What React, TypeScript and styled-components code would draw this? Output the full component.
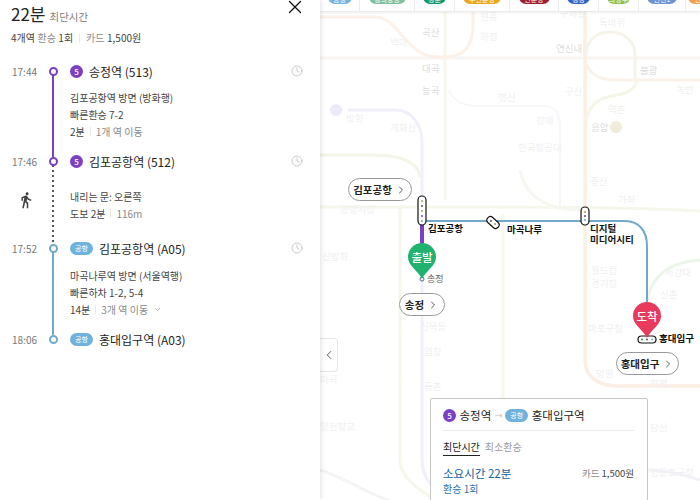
import { ChevronDown, ChevronLeft, ChevronRight, Clock, X } from 'lucide-react'
import { FC, ReactNode } from 'react'
import { MdDirectionsWalk } from 'react-icons/md'
import styled, { createGlobalStyle } from 'styled-components'

const PURPLE = '#7b3fc4'
const BLUE = '#70a9c9'
const AIRPORT = '#6fb2dd'

const GlobalStyle = createGlobalStyle`
  html, body {
    margin: 0;
    padding: 0;
    background: #fff;
  }
  body {
    font-family: "Noto Sans CJK KR", "Noto Sans", sans-serif;
    color: #222;
  }
`

const TOP_LINES = [
  { name: '공항', cell: 40, chip: 24, color: '#73b4e2' },
  { name: '경의중앙', cell: 55, chip: 37, color: '#7fbf9f' },
  { name: '경춘', cell: 40, chip: 23, color: '#0f9a6c' },
  { name: '수인분당', cell: 55, chip: 38, color: '#eba71c' },
  { name: '신분당', cell: 49, chip: 31, color: '#a01c33' },
  { name: '경강', cell: 40, chip: 23, color: '#2f62c4' },
  { name: '의정부', cell: 40, chip: 23, color: '#8cc04a' },
  { name: '인천1', cell: 47, chip: 30, color: '#6f93d2' },
  { name: '인천2', cell: 34, chip: 30, color: '#f0a04e' }
]

const FAINT_LABELS = [
  { text: '곡산', x: 102, y: 26, strong: true },
  { text: '백마', x: 70, y: 36 },
  { text: '화정', x: 160, y: 30 },
  { text: '원흥', x: 160, y: 10 },
  { text: '대곡', x: 102, y: 62, strong: true },
  { text: '능곡', x: 102, y: 84, strong: true },
  { text: '행신', x: 178, y: 91 },
  { text: '강매', x: 216, y: 114 },
  { text: '연신내', x: 236, y: 42, strong: true },
  { text: '구파발', x: 240, y: 7 },
  { text: '독바위', x: 279, y: 16 },
  { text: '불광', x: 320, y: 64, strong: true },
  { text: '구산', x: 245, y: 85 },
  { text: '녹번', x: 356, y: 83 },
  { text: '역촌', x: 288, y: 103 },
  { text: '응암', x: 271, y: 121, strong: true },
  { text: '방화', x: 26, y: 112 },
  { text: '개화산', x: 70, y: 121 },
  { text: '한국항공대', x: 198, y: 141 },
  { text: '증산', x: 270, y: 175 },
  { text: '가좌', x: 298, y: 193 },
  { text: '월드컵', x: 271, y: 264 },
  { text: '경기장', x: 271, y: 277 },
  { text: '신촌', x: 340, y: 288 },
  { text: '서강대', x: 345, y: 266 },
  { text: '마포구청', x: 268, y: 322 },
  { text: '망원', x: 276, y: 367 },
  { text: '합정', x: 330, y: 377 },
  { text: '당산', x: 330, y: 421 },
  { text: '영등포구청', x: 330, y: 466 },
  { text: '마곡', x: 0, y: 373 },
  { text: '양천향교', x: 0, y: 420 },
  { text: '신목동', x: 100, y: 320 },
  { text: '공항시장', x: 20, y: 203 },
  { text: '신방화', x: 2, y: 250 },
  { text: '염창', x: 104, y: 345 },
  { text: '등촌', x: 104, y: 380 }
]

const Stop: FC<{ time: string; badge: ReactNode; name: string; color: string; clock?: boolean }> = ({
  time,
  badge,
  name,
  color,
  clock
}) => (
  <StopRow>
    <Time>{time}</Time>
    <RailCell>
      <Dot $color={color} />
    </RailCell>
    <StopName>
      {badge}
      {name}
    </StopName>
    {clock && <Clock size={12} color="#b4b4b4" strokeWidth={1.4} />}
  </StopRow>
)

const Pin: FC<{ color: string; label: string; x: number; y: number }> = ({ color, label, x, y }) => (
  <PinWrap $x={x} $y={y}>
    <svg width="28" height="36" viewBox="0 0 28 36">
      <path d="M14 0a14 14 0 0 1 14 14c0 9-9.500 13-14 22C9.500 27 0 23 0 14A14 14 0 0 1 14 0z" fill={color} />
    </svg>
    <PinLabel>{label}</PinLabel>
  </PinWrap>
)

const App: FC = () => {
  return (
    <Page>
      <GlobalStyle />
      <Sidebar>
        <CloseButton>
          <X size={22} strokeWidth={1.4} color="#111" />
        </CloseButton>
        <Title>
          <Minutes>22분</Minutes>
          <TitleNote>최단시간</TitleNote>
        </Title>
        <Summary>
          <span>4개역</span>
          <Muted>환승</Muted>
          <span>1회</span>
          <SummarySep />
          <Muted>카드</Muted>
          <span>1,500원</span>
        </Summary>

        <Timeline>
          <Stop time="17:44" badge={<LineBadge>5</LineBadge>} name="송정역 (513)" color={PURPLE} clock />
          <Segment>
            <SideCell />
            <RailCell>
              <RailLine $color={PURPLE} />
            </RailCell>
            <Details $top={8} $bottom={11}>
              <div>김포공항역 방면 (방화행)</div>
              <div>빠른환승 7-2</div>
              <div>
                2분
                <Sep />
                <Muted>1개 역 이동</Muted>
              </div>
            </Details>
          </Segment>

          <Stop time="17:46" badge={<LineBadge>5</LineBadge>} name="김포공항역 (512)" color={PURPLE} clock />
          <Segment>
            <SideCell>
              <MdDirectionsWalk size={18} color="#444" />
            </SideCell>
            <RailCell>
              <RailLine $dotted $color="#555" />
            </RailCell>
            <Details $top={17} $bottom={16}>
              <div>내리는 문: 오른쪽</div>
              <div>
                도보 2분
                <Sep />
                <Muted>116m</Muted>
              </div>
            </Details>
          </Segment>

          <Stop time="17:52" badge={<AirportBadge>공항</AirportBadge>} name="김포공항역 (A05)" color={BLUE} clock />
          <Segment>
            <SideCell />
            <RailCell>
              <RailLine $color={BLUE} />
            </RailCell>
            <Details $top={9} $bottom={11}>
              <div>마곡나루역 방면 (서울역행)</div>
              <div>빠른하차 1-2, 5-4</div>
              <div>
                14분
                <Sep />
                <Muted>3개 역 이동</Muted>
                <ChevronDown size={9} color="#999" style={{ marginLeft: 5 }} />
              </div>
            </Details>
          </Segment>

          <Stop time="18:06" badge={<AirportBadge>공항</AirportBadge>} name="홍대입구역 (A03)" color={BLUE} />
        </Timeline>
      </Sidebar>

      <MapArea>
        <LineBar>
          {TOP_LINES.map(line => (
            <LineCell key={line.name} $width={line.cell}>
              <LineChip $width={line.chip} $color={line.color}>
                {line.name}
              </LineChip>
            </LineCell>
          ))}
        </LineBar>

        <RouteMap viewBox="0 0 380 500" width="380" height="500">
          <g fill="none" strokeWidth="3">
            <path d="M0 58H380" stroke="#f8f5f2" />
            <path d="M0 17H55C80 17 85 57 118 57H125C145 57 153 45 153 25V12" stroke="#fcf1e8" />
            <path d="M125 12V200" stroke="#f6f6ea" />
            <path d="M129 90C135 105 150 106 160 106H225C238 106 240 118 240 130V210" stroke="#f7f7f9" strokeWidth="2" />
            <path d="M0 155H55C85 155 100 165 100 178" stroke="#f4f4e8" />
            <path d="M28 110H75C92 110 102 125 102 142V460C102 480 115 490 130 500" stroke="#f0effb" />
            <path d="M0 207H190C205 207 300 207 380 211" stroke="#f6f7ec" />
            <path d="M80 207V460C80 478 100 490 115 500" stroke="#f6f7ec" />
            <path d="M183 214V500" stroke="#f7f7ec" />
            <path d="M265 12V360C265 378 280 386 298 386H380" stroke="#fbeee3" strokeWidth="3.500" />
            <path d="M265 62C270 75 280 80 296 80H380" stroke="#fcf1e8" />
            <path d="M315 80V55C315 40 303 32 290 32C275 32 266 42 266 55" stroke="#f6f4ea" />
            <path d="M266 120C270 100 285 97 296 95C310 93 315 88 317 80" stroke="#f5f5ea" />
            <path d="M327 300C332 275 350 262 380 260" stroke="#ecf5ea" />
            <path d="M200 170C205 195 225 210 260 210" stroke="#f8f6f0" />
            <path d="M0 470C25 478 60 500 70 500" stroke="#f6f3f8" />
            <path d="M250 500C290 470 320 460 380 480" stroke="#f3f0fa" />
          </g>
          <circle cx="16" cy="110" r="6" fill="#eceaf8" />
          <circle cx="296" cy="127" r="6" fill="#efecdc" />
          <path d="M102 221H305C320 221 327 232 327 246V305" fill="none" stroke={BLUE} strokeWidth="2" />
          <path d="M102 222V246" fill="none" stroke={PURPLE} strokeWidth="4" />
          <circle cx="102" cy="279" r="2" fill="#fff" stroke="#49708a" strokeWidth="1" />

          <rect x="98" y="196" width="8" height="29" rx="4" fill="#fff" stroke="#111" strokeWidth="1.200" />
          <circle cx="102" cy="201" r="1" fill="#9aa35a" />
          <circle cx="102" cy="206" r="1" fill="#555" />
          <circle cx="102" cy="211" r="1" fill="#9aa35a" />
          <circle cx="102" cy="216" r="1" fill={PURPLE} />
          <circle cx="102" cy="221" r="1" fill={BLUE} />

          <rect x="166" y="219" width="14" height="7" rx="3.500" fill="#fff" stroke="#111" strokeWidth="1.200" transform="rotate(42 173 222.500)" />
          <circle cx="175" cy="224" r="1" fill="#9aa35a" />
          <circle cx="171" cy="221" r="1" fill="#555" />

          <rect x="261" y="207" width="8" height="18" rx="4" fill="#fff" stroke="#111" strokeWidth="1.200" />
          <circle cx="265" cy="212" r="1" fill="#c98a4a" />
          <circle cx="265" cy="216" r="1" fill="#555" />
          <circle cx="265" cy="220" r="1" fill={BLUE} />

          <rect x="318" y="336" width="18" height="7" rx="3.500" fill="#fff" stroke="#111" strokeWidth="1.200" />
          <circle cx="322" cy="339.500" r="1" fill="#2b8a4a" />
          <circle cx="327" cy="339.500" r="1" fill="#555" />
          <circle cx="332" cy="339.500" r="1" fill={BLUE} />
        </RouteMap>

        {FAINT_LABELS.map(label => (
          <FaintLabel key={label.text} $x={label.x} $y={label.y} $strong={label.strong}>
            {label.text}
          </FaintLabel>
        ))}

        <StationLabel $x={108} $y={223}>김포공항</StationLabel>
        <StationLabel $x={187} $y={224}>마곡나루</StationLabel>
        <StationLabel $x={270} $y={223}>
          디지털
          <br />
          미디어시티
        </StationLabel>
        <StationLabel $x={339} $y={333}>홍대입구</StationLabel>
        <SmallLabel $x={107} $y={273}>송정</SmallLabel>

        <Pin color="#1fb36f" label="출발" x={88} y={243} />
        <Pin color="#e83a5c" label="도착" x={313} y={302} />

        <Callout $x={28} $y={178} $width={64}>
          김포공항
          <ChevronRight size={12} strokeWidth={1.500} />
        </Callout>
        <Callout $x={79} $y={293} $width={46}>
          송정
          <ChevronRight size={12} strokeWidth={1.500} />
        </Callout>
        <Callout $x={296} $y={352} $width={63}>
          홍대입구
          <ChevronRight size={12} strokeWidth={1.500} />
        </Callout>

        <CollapseHandle>
          <ChevronLeft size={14} color="#444" strokeWidth={1.500} />
        </CollapseHandle>

        <RouteCard>
          <CardHeader>
            <LineBadge>5</LineBadge>
            송정역
            <Arrow>→</Arrow>
            <AirportBadge>공항</AirportBadge>
            홍대입구역
          </CardHeader>
          <CardTabs>
            <CardTab $active>최단시간</CardTab>
            <CardTab>최소환승</CardTab>
          </CardTabs>
          <CardRow>
            <Duration>소요시간 22분</Duration>
            <Fare>
              <Muted>카드</Muted> 1,500원
            </Fare>
          </CardRow>
          <Transfer>환승 1회</Transfer>
        </RouteCard>
      </MapArea>
    </Page>
  )
}

const Page = styled.div`
  display: flex;
  width: 700px;
  height: 500px;
  overflow: hidden;
`

const Sidebar = styled.aside`
  position: relative;
  z-index: 3;
  flex: 0 0 320px;
  box-sizing: border-box;
  height: 500px;
  background: #fff;
  box-shadow: 1px 0 5px rgba(0, 0, 0, 0.12);
`

const CloseButton = styled.div`
  position: absolute;
  top: -4px;
  left: 284px;
  display: flex;
`

const Title = styled.div`
  display: flex;
  align-items: baseline;
  gap: 4px;
  height: 28px;
  padding-left: 11px;
`

const Minutes = styled.span`
  font-size: 17px;
  line-height: 28px;
  font-weight: 400;
  color: #222;
`

const TitleNote = styled.span`
  font-size: 10.500px;
  color: #808080;
`

const Summary = styled.div`
  display: flex;
  align-items: center;
  gap: 2.500px;
  height: 18px;
  margin-top: 1px;
  padding-left: 11px;
  font-size: 10px;
  line-height: 18px;
  color: #444;
`

const Muted = styled.span`
  color: #8a8a8a;
`

const Sep = styled.span`
  display: inline-block;
  width: 1px;
  height: 9px;
  margin: 0 5px;
  background: #e8e8e8;
`

const SummarySep = styled(Sep)`
  margin: 0 3.500px;
`

const Timeline = styled.div`
  display: flex;
  flex-direction: column;
  margin-top: 14px;
  padding: 0 17px 0 12px;
`

const StopRow = styled.div`
  display: grid;
  grid-template-columns: 34px 14px 1fr 12px;
  align-items: center;
  height: 20px;
`

const Time = styled.span`
  font-size: 10px;
  color: #777;
`

const RailCell = styled.div`
  position: relative;
  display: flex;
  justify-content: center;
  align-items: center;
`

const Dot = styled.span<{ $color: string }>`
  position: relative;
  z-index: 1;
  box-sizing: border-box;
  width: 9px;
  height: 9px;
  border: 2px solid ${p => p.$color};
  border-radius: 50%;
  background: #fff;
`

const StopName = styled.div`
  display: flex;
  align-items: center;
  gap: 6px;
  padding-left: 10px;
  font-size: 12px;
  font-weight: 400;
  color: #222;
  white-space: nowrap;
`

const LineBadge = styled.span`
  display: inline-flex;
  align-items: center;
  justify-content: center;
  width: 13px;
  height: 13px;
  border-radius: 50%;
  background: ${PURPLE};
  color: #fff;
  font-size: 8px;
  font-weight: 500;
`

const AirportBadge = styled.span`
  display: inline-flex;
  align-items: center;
  justify-content: center;
  width: 23px;
  height: 13px;
  border-radius: 7px;
  background: ${AIRPORT};
  color: #fff;
  font-size: 7px;
`

const Segment = styled.div`
  display: grid;
  grid-template-columns: 34px 14px 1fr;
`

const SideCell = styled.div`
  display: flex;
  justify-content: center;
  padding: 20px 6px 0 0;
`

const RailLine = styled.span<{ $color: string; $dotted?: boolean }>`
  align-self: stretch;
  width: 2px;
  margin: -6px 0;
  background: ${p =>
    p.$dotted
      ? `repeating-linear-gradient(to bottom, ${p.$color} 0 2px, transparent 2px 5px)`
      : p.$color};
`

const Details = styled.div<{ $top: number; $bottom: number }>`
  display: flex;
  flex-direction: column;
  padding: ${p => p.$top}px 0 ${p => p.$bottom}px 10px;
  font-size: 10px;
  line-height: 17px;
  color: #444;
  > div {
    display: flex;
    align-items: center;
    height: 17px;
  }
`

const MapArea = styled.main`
  position: relative;
  flex: 1;
  height: 500px;
  overflow: hidden;
  background: #fff;
`

const LineBar = styled.div`
  position: relative;
  z-index: 2;
  display: flex;
  height: 11px;
  overflow: hidden;
  background: #fff;
  box-shadow: 0 1px 3px rgba(0, 0, 0, 0.12);
`

const LineCell = styled.div<{ $width: number }>`
  display: flex;
  flex: 0 0 ${p => p.$width}px;
  justify-content: center;
  align-items: flex-end;
  box-sizing: border-box;
  padding-bottom: 7px;
  border-right: 1px solid #ececec;
  &:last-child {
    border-right: 0;
  }
`

const LineChip = styled.span<{ $width: number; $color: string }>`
  display: flex;
  flex: 0 0 ${p => p.$width}px;
  justify-content: center;
  align-items: flex-end;
  height: 14px;
  border-radius: 7px;
  background: ${p => p.$color};
  color: #fff;
  font-size: 7px;
  line-height: 9px;
  white-space: nowrap;
`

const RouteMap = styled.svg`
  position: absolute;
  top: 0;
  left: 0;
`

const FaintLabel = styled.span<{ $x: number; $y: number; $strong?: boolean }>`
  position: absolute;
  top: ${p => p.$y}px;
  left: ${p => p.$x}px;
  font-size: 9.500px;
  line-height: 13px;
  color: ${p => (p.$strong ? '#dcdcdc' : '#f0f0f0')};
  white-space: nowrap;
`

const StationLabel = styled.span<{ $x: number; $y: number }>`
  position: absolute;
  top: ${p => p.$y}px;
  left: ${p => p.$x}px;
  font-size: 9.500px;
  font-weight: 700;
  line-height: 11px;
  color: #111;
  white-space: nowrap;
`

const SmallLabel = styled.span<{ $x: number; $y: number }>`
  position: absolute;
  top: ${p => p.$y}px;
  left: ${p => p.$x}px;
  font-size: 9px;
  line-height: 12px;
  color: #666;
`

const PinWrap = styled.div<{ $x: number; $y: number }>`
  position: absolute;
  top: ${p => p.$y}px;
  left: ${p => p.$x}px;
  width: 28px;
  height: 36px;
  svg {
    display: block;
  }
`

const PinLabel = styled.span`
  position: absolute;
  top: 5px;
  left: 0;
  width: 28px;
  text-align: center;
  font-size: 11.500px;
  font-weight: 500;
  line-height: 18px;
  color: #fff;
`

const Callout = styled.div<{ $x: number; $y: number; $width: number }>`
  position: absolute;
  top: ${p => p.$y}px;
  left: ${p => p.$x}px;
  display: flex;
  align-items: center;
  justify-content: center;
  gap: 3px;
  box-sizing: border-box;
  width: ${p => p.$width}px;
  height: 23px;
  border: 1px solid #999;
  border-radius: 12px;
  background: #fff;
  font-size: 10.500px;
  font-weight: 700;
  color: #222;
  white-space: nowrap;
`

const CollapseHandle = styled.div`
  position: absolute;
  top: 338px;
  left: 0;
  display: flex;
  align-items: center;
  justify-content: center;
  box-sizing: border-box;
  width: 18px;
  height: 34px;
  border: 1px solid #e6e6e6;
  border-left: 0;
  border-radius: 0 4px 4px 0;
  background: #fff;
`

const RouteCard = styled.section`
  position: absolute;
  top: 398px;
  left: 110px;
  box-sizing: border-box;
  width: 218px;
  height: 110px;
  padding: 0 13px 0 12px;
  border: 1px solid #c4c4c4;
  border-radius: 2px;
  background: #fff;
`

const CardHeader = styled.div`
  display: flex;
  align-items: center;
  gap: 3.500px;
  height: 30px;
  padding-top: 1px;
  border-bottom: 1px solid #ececec;
  font-size: 11.500px;
  color: #222;
  white-space: nowrap;
`

const Arrow = styled.span`
  width: 7px;
  overflow: hidden;
  color: #bbb;
  font-size: 8px;
`

const CardTabs = styled.div`
  display: flex;
  gap: 5px;
  margin-top: 8px;
`

const CardTab = styled.span<{ $active?: boolean }>`
  padding-bottom: 1px;
  border-bottom: 1px solid ${p => (p.$active ? '#222' : 'transparent')};
  font-size: 10px;
  line-height: 15px;
  color: ${p => (p.$active ? '#222' : '#999')};
`

const CardRow = styled.div`
  display: flex;
  align-items: center;
  justify-content: space-between;
  margin-top: 8px;
`

const Duration = styled.span`
  font-size: 11.500px;
  line-height: 18px;
  color: #11609f;
`

const Fare = styled.span`
  font-size: 9.500px;
  color: #444;
`

const Transfer = styled.div`
  font-size: 10px;
  line-height: 14px;
  color: #2a73ad;
`

export default App
